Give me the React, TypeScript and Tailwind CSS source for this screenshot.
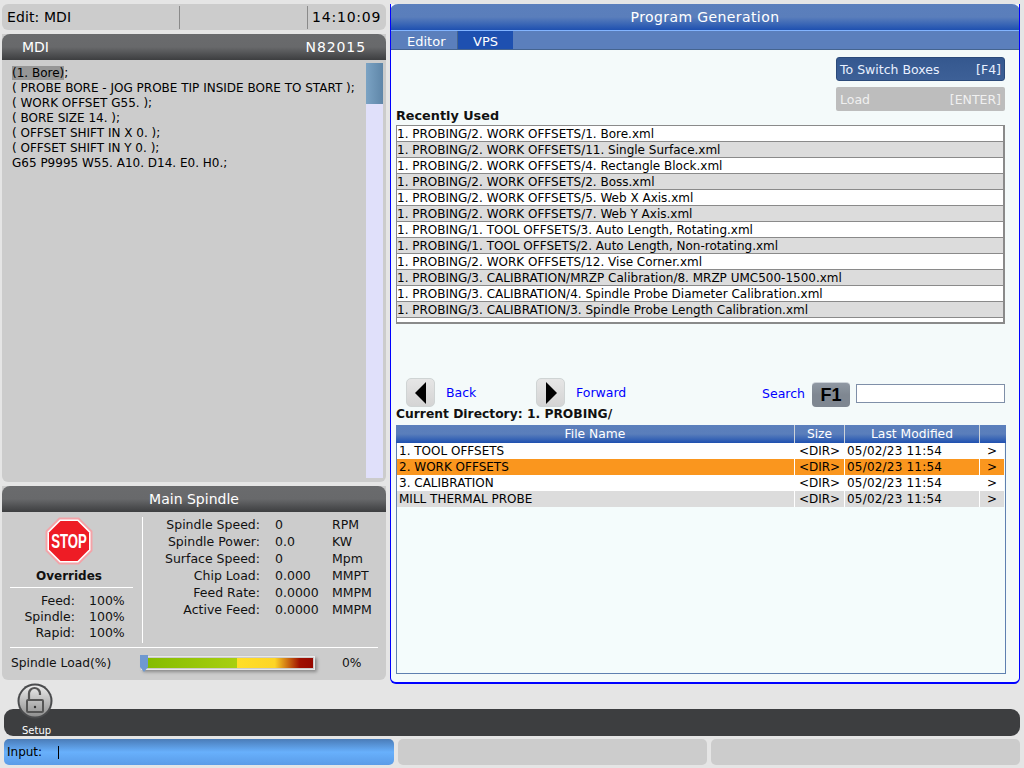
const font = "font-['DejaVu_Sans',sans-serif]";

const code = [
  "( PROBE BORE - JOG PROBE TIP INSIDE BORE TO START );",
  "( WORK OFFSET G55. );",
  "( BORE SIZE 14. );",
  "( OFFSET SHIFT IN X 0. );",
  "( OFFSET SHIFT IN Y 0. );",
  "G65 P9995 W55. A10. D14. E0. H0.;",
];

const recent = [
  "1. PROBING/2. WORK OFFSETS/1. Bore.xml",
  "1. PROBING/2. WORK OFFSETS/11. Single Surface.xml",
  "1. PROBING/2. WORK OFFSETS/4. Rectangle Block.xml",
  "1. PROBING/2. WORK OFFSETS/2. Boss.xml",
  "1. PROBING/2. WORK OFFSETS/5. Web X Axis.xml",
  "1. PROBING/2. WORK OFFSETS/7. Web Y Axis.xml",
  "1. PROBING/1. TOOL OFFSETS/3. Auto Length, Rotating.xml",
  "1. PROBING/1. TOOL OFFSETS/2. Auto Length, Non-rotating.xml",
  "1. PROBING/2. WORK OFFSETS/12. Vise Corner.xml",
  "1. PROBING/3. CALIBRATION/MRZP Calibration/8. MRZP UMC500-1500.xml",
  "1. PROBING/3. CALIBRATION/4. Spindle Probe Diameter Calibration.xml",
  "1. PROBING/3. CALIBRATION/3. Spindle Probe Length Calibration.xml",
];

const files = [
  { name: "1. TOOL OFFSETS", bg: "bg-white" },
  { name: "2. WORK OFFSETS", bg: "bg-[#fa961e]" },
  { name: "3. CALIBRATION", bg: "bg-white" },
  { name: "MILL THERMAL PROBE", bg: "bg-[#dcdcdc]" },
];

const spindleRows = [
  ["Spindle Speed:", "0", "RPM"],
  ["Spindle Power:", "0.0", "KW"],
  ["Surface Speed:", "0", "Mpm"],
  ["Chip Load:", "0.000", "MMPT"],
  ["Feed Rate:", "0.0000", "MMPM"],
  ["Active Feed:", "0.0000", "MMPM"],
];

const overrides = [
  ["Feed:", "100%"],
  ["Spindle:", "100%"],
  ["Rapid:", "100%"],
];

function DarkHeader({ children }: { children: React.ReactNode }) {
  return (
    <div className="h-[26px] shrink-0 rounded-t-[8px] bg-gradient-to-b from-[#6a6b6d] via-[#68696b] to-[#3d3e40] text-white text-[14px] leading-[26px]">
      {children}
    </div>
  );
}

function StopSign() {
  return (
    <svg width="48" height="48" viewBox="0 0 48 48" className="block">
      <polygon points="14,0.5 34,0.5 47.5,14 47.5,34 34,47.5 14,47.5 0.5,34 0.5,14" fill="#f3a3a8" />
      <polygon points="14.8,2.5 33.2,2.5 45.5,14.8 45.5,33.2 33.2,45.5 14.8,45.5 2.5,33.2 2.5,14.8" fill="#ffffff" />
      <polygon points="15.5,4 32.5,4 44,15.5 44,32.5 32.5,44 15.5,44 4,32.5 4,15.5" fill="#ee1c25" />
      <text
        textAnchor="middle"
        transform="translate(24 31) scale(0.66 1)"
        fill="#ffffff"
        fontSize="20"
        fontWeight="700"
        fontFamily="'Liberation Sans', sans-serif"
      >
        STOP
      </text>
    </svg>
  );
}

function LockIcon() {
  return (
    <svg width="36" height="36" viewBox="0 0 36 36" className="block">
      <defs>
        <linearGradient id="lockFace" x1="0" y1="0" x2="0" y2="1">
          <stop offset="0" stopColor="#ececec" />
          <stop offset="0.5" stopColor="#bcbcbc" />
          <stop offset="1" stopColor="#8f8f8f" />
        </linearGradient>
      </defs>
      <circle cx="18" cy="18" r="17.5" fill="#4a4b4d" />
      <circle cx="18" cy="18" r="15.5" fill="url(#lockFace)" />
      <path d="M12 17 V10.5 a5.5 5.5 0 0 1 11 0 V12" fill="none" stroke="#555555" strokeWidth="2.2" />
      <rect x="10" y="17" width="16" height="12" rx="1" fill="none" stroke="#555555" strokeWidth="2" />
      <circle cx="18" cy="24" r="1.2" fill="#333333" />
    </svg>
  );
}

function ArrowButton({ dir }: { dir: "left" | "right" }) {
  return (
    <div className="w-[29px] h-[29px] rounded-[5px] bg-gradient-to-b from-[#e6e6e6] to-[#d4d4d4] border border-[#cfd4d4] flex items-center justify-center">
      <svg width="14" height="24" viewBox="0 0 14 24">
        <polygon points={dir === "left" ? "12,1 12,23 1,12" : "2,1 2,23 13,12"} fill="#000000" />
      </svg>
    </div>
  );
}

function LeftColumn() {
  return (
    <div className="w-[384px] ml-[2px] flex flex-col gap-[4px]">
      <div className="h-[26px] rounded-[6px] bg-[#cccccc] flex items-center text-[14px] text-black">
        <div className="w-[177px] pl-[5px] tracking-[0.1px]">Edit: MDI</div>
        <div className="w-[1px] h-[23px] bg-[#8a8a8a]" />
        <div className="w-[127px]" />
        <div className="w-[1px] h-[23px] bg-[#8a8a8a]" />
        <div className="pl-[4px] tracking-[0.8px]">14:10:09</div>
      </div>

      <div className="h-[448px] flex flex-col rounded-b-[6px] bg-[#cccccc]">
        <DarkHeader>
          <div className="flex justify-between pl-[20px] pr-[20px]">
            <span>MDI</span>
            <span className="tracking-[0.9px]">N82015</span>
          </div>
        </DarkHeader>
        <div className="flex-1 flex pt-[3px] pr-[3px]">
          <div className="flex-1 pl-[10px] pt-[3px] text-[12px] leading-[15px] text-black">
            <div>
              <span className="bg-[#969696]">(1. Bore)</span>;
            </div>
            {code.map((line) => (
              <div key={line}>{line}</div>
            ))}
          </div>
          <div className="w-[17px] h-[415px] bg-[#e0e0fa]">
            <div className="h-[41px] bg-gradient-to-r from-[#7ba3c4] to-[#5f86a8]" />
          </div>
        </div>
      </div>

      <div className="h-[194px] flex flex-col rounded-b-[6px] bg-[#cccccc]">
        <DarkHeader>
          <div className="text-center">Main Spindle</div>
        </DarkHeader>
        <div className="flex-1 px-[8px] pt-[5px]">
          <div className="flex h-[126px]">
            <div className="w-[132px] flex flex-col">
              <div className="flex justify-center pr-[14px]">
                <StopSign />
              </div>
              <div className="text-center font-bold text-[12px] leading-[14px] mt-[4px] mr-[14px] mb-[4px] text-[#111111]">Overrides</div>
              <div className="h-[1px] bg-white w-[123px]" />
              <div className="mt-[5px]">
                {overrides.map(([label, value]) => (
                  <div key={label} className="flex text-[12.5px] leading-[16px] text-[#111111]">
                    <div className="w-[65px] text-right">{label}</div>
                    <div className="ml-[14px]">{value}</div>
                  </div>
                ))}
              </div>
            </div>
            <div className="w-[1px] bg-white" />
            <div className="flex-1 -mt-[1px]">
              {spindleRows.map(([label, value, unit]) => (
                <div key={label} className="flex text-[12.5px] leading-[17px] text-[#111111]">
                  <div className="w-[117px] text-right">{label}</div>
                  <div className="w-[72px] pl-[15px]">{value}</div>
                  <div>{unit}</div>
                </div>
              ))}
            </div>
          </div>
          <div className="h-[1px] bg-white mt-[4px]" />
          <div className="flex items-center mt-[5px] h-[20px] text-[12.3px] text-[#111111]">
            <div className="w-[131px] pl-[1px]">Spindle Load(%)</div>
            <div className="relative w-[174px] h-[14px] border border-[#e8e8e8] p-[1px] pl-[5px] shadow-[2px_2px_3px_#8a8a8a]">
              <div className="h-full bg-[linear-gradient(to_right,#84bc00_0%,#a8cf10_54%,#ffdf28_54%,#fdd526_77%,#a01000_92%,#960800_100%)]" />
              <svg width="9" height="17" viewBox="0 0 9 17" className="absolute left-[-2px] top-[-2px]">
                <polygon points="0,0 8,0 8,12 4,17 0,12" fill="#6f98d0" />
              </svg>
            </div>
            <div className="ml-[27px]">0%</div>
          </div>
        </div>
      </div>
    </div>
  );
}

function RightPanel() {
  return (
    <div className="w-[630px] ml-[4px] flex flex-col rounded-b-[6px] border-b-2 border-x border-x-[#0000ff] border-b-[#0000ff] border-t-0 bg-[#f4fafa] overflow-hidden">
      <div className="-mx-[1px] h-[26px] shrink-0 rounded-t-[8px] bg-gradient-to-b from-[#5b7fbc] via-[#5a7ebb] to-[#1e50b0] text-white text-[14px] leading-[26px] text-center tracking-[0.4px]">
        Program Generation
      </div>
      <div className="h-[1px] shrink-0 bg-[#82b4ff]" />
      <div className="h-[19px] shrink-0 flex bg-[#5b7fbc] border-b border-[#45648f] text-white text-[13px] leading-[21px]">
        <div className="w-[67px] pl-[16px] border-r border-[#45648f]">Editor</div>
        <div className="w-[55px] text-center bg-[#1e50b0]">VPS</div>
      </div>

      <div className="flex-1 flex flex-col pl-[5px]">
        <div className="flex flex-col items-end pr-[14px] pt-[7px] gap-[6px]">
          <div className="w-[169px] h-[24px] rounded-[3px] bg-gradient-to-b from-[#35588f] to-[#3d6097] border border-[#2b4a7a] flex items-center justify-between pl-[3px] pr-[3px] pt-[2px] text-[12.5px] text-[#e8f0ff]">
            <span>To Switch Boxes</span>
            <span>[F4]</span>
          </div>
          <div className="w-[169px] h-[24px] rounded-[2px] bg-[#bdbdbd] flex items-center justify-between px-[4px] pt-[2px] text-[12.5px] text-[#f0f0f0]">
            <span>Load</span>
            <span>[ENTER]</span>
          </div>
        </div>

        <div className="font-bold text-[12.8px] leading-[14px] text-[#111111] mt-[-2px] h-[16px]">Recently Used</div>
        <div className="w-[609px] h-[199px] bg-white border-t border-l border-[#8a8a8a] border-r-2 border-b-2">
          {recent.map((row, i) => (
            <div
              key={row}
              className={`h-[16px] border-b border-[#8a8a8a] text-[12px] leading-[17px] text-black whitespace-nowrap ${
                i % 2 === 1 ? "bg-[#dcdcdc]" : "bg-white"
              }`}
            >
              {row}
            </div>
          ))}
        </div>

        <div className="flex items-center h-[29px] mt-[54px] pl-[10px] text-[12.5px] text-[#0000ff]">
          <ArrowButton dir="left" />
          <span className="ml-[11px] w-[90px] mt-[1px]">Back</span>
          <ArrowButton dir="right" />
          <span className="ml-[11px] w-[186px] mt-[1px]">Forward</span>
          <span className="w-[50px] mt-[4px]">Search</span>
          <div className="w-[38px] h-[25px] mt-[4px] rounded-[4px] bg-gradient-to-b from-[#8f98a3] via-[#7f8791] to-[#7f8791] border-t border-[#cdd3d9] flex items-center justify-center text-[18px] font-bold text-black font-['Liberation_Sans',sans-serif]">
            F1
          </div>
          <div className="w-[149px] h-[19px] ml-[6px] mt-[1px] bg-white border border-[#7f8fa8]" />
        </div>

        <div className="font-bold text-[12.3px] leading-[14px] text-[#111111] h-[18px]">Current Directory: 1. PROBING/</div>

        <div className="w-[610px] h-[249px] border border-[#5f80b0] border-t-0 bg-[#f4fcfc]">
          <div className="-mx-[1px] flex h-[18px] bg-gradient-to-b from-[#5b7fbc] via-[#5a7ebb] to-[#1e50b0] text-white text-[12.3px] leading-[19px] text-center">
            <div className="w-[398px]">File Name</div>
            <div className="w-[50px] border-l border-[#cdd3d9]">Size</div>
            <div className="w-[135px] border-l border-[#cdd3d9]">Last Modified</div>
            <div className="w-[27px] border-l border-[#cdd3d9]" />
          </div>
          {files.map((file) => (
            <div key={file.name} className={`flex h-[16px] text-[12px] leading-[16px] text-black ${file.bg} w-[607px]`}>
              <div className="w-[397px] pl-[2px]">{file.name}</div>
              <div className="w-[50px] border-l border-white text-center">&lt;DIR&gt;</div>
              <div className="w-[135px] border-l border-white pl-[2px] tracking-[0.2px] whitespace-nowrap">05/02/23 11:54</div>
              <div className="w-[25px] border-l border-white text-center">&gt;</div>
            </div>
          ))}
        </div>
      </div>
    </div>
  );
}

export default function App() {
  return (
    <div className={`w-[1024px] h-[768px] overflow-hidden bg-[#e5e5e5] flex flex-col ${font}`}>
      <div className="h-[680px] mt-[4px] flex shrink-0">
        <LeftColumn />
        <RightPanel />
      </div>

      <div className="relative h-[27px] mt-[25px] mx-[4px] rounded-[9px] bg-[#3d3e40] shrink-0">
        <div className="absolute left-[13px] top-[-26px]">
          <LockIcon />
        </div>
        <div className="absolute left-[18px] top-[16px] text-white text-[10px] leading-[12px]">Setup</div>
      </div>

      <div className="h-[26px] mt-[3px] mx-[4px] flex gap-[4px] shrink-0">
        <div className="w-[390px] rounded-[5px] bg-gradient-to-b from-[#4a7cb8] via-[#68b0fc] to-[#5a9ce8] flex items-center text-[12px] text-black pl-[3px]">
          <span>Input:</span>
          <span className="ml-[16px] w-[1px] h-[13px] bg-black" />
        </div>
        <div className="w-[309px] rounded-[5px] bg-[#cccccc]" />
        <div className="w-[309px] rounded-[5px] bg-[#cccccc]" />
      </div>
    </div>
  );
}
